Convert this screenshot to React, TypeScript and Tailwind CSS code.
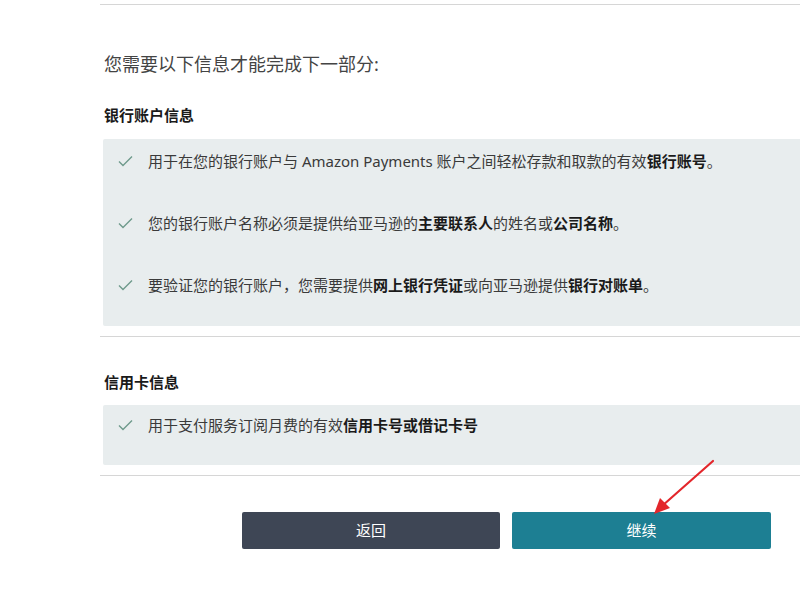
import React from "react";

const Check = () => (
  <svg width="15" height="12" viewBox="0 0 15 12" className="shrink-0">
    <polyline points="1,6.5 5,10.5 14,1.5" fill="none" stroke="#6e9a8c" strokeWidth="1.4" />
  </svg>
);

const Row = ({ children }: { children: React.ReactNode }) => (
  <div className="flex items-center h-[22px] pl-[15px] gap-[15px]">
    <Check />
    <span className="text-[15px] leading-[22px] text-[#3a3a3a] whitespace-nowrap">{children}</span>
  </div>
);

const B = ({ children }: { children: React.ReactNode }) => (
  <span className="font-bold text-[#1a1a1a]">{children}</span>
);

export default function App() {
  return (
    <div
      className="relative w-[800px] h-[600px] bg-white overflow-hidden"
      style={{ fontFamily: '"Noto Sans", "Noto Sans CJK SC", sans-serif' }}
    >
      <div className="ml-[100px] w-[813px] pt-[4px]">
        <div className="h-px bg-[#d6d6d6]" />
        <div className="mt-[46px] pl-[4px] text-[18px] leading-[26px] text-[#444]">
          您需要以下信息才能完成下一部分:
        </div>
        <div className="mt-[27px] pl-[4px] text-[15px] leading-[22px] font-bold text-[#1a1a1a]">
          银行账户信息
        </div>
        <div className="mt-[13px] ml-[3px] bg-[#e8edee] pt-[11px] pb-[30px] flex flex-col gap-[40px] rounded-[2px]">
          <Row>
            用于在您的银行账户与 Amazon Payments 账户之间轻松存款和取款的有效<B>银行账号</B>。
          </Row>
          <Row>
            您的银行账户名称必须是提供给亚马逊的<B>主要联系人</B>的姓名或<B>公司名称</B>。
          </Row>
          <Row>
            要验证您的银行账户，您需要提供<B>网上银行凭证</B>或向亚马逊提供<B>银行对账单</B>。
          </Row>
        </div>
        <div className="mt-[10px] h-px bg-[#d6d6d6]" />
        <div className="mt-[34px] pl-[4px] text-[15px] leading-[22px] font-bold text-[#1a1a1a]">
          信用卡信息
        </div>
        <div className="mt-[12px] ml-[3px] bg-[#e8edee] pt-[9px] pb-[29px] rounded-[2px]">
          <Row>
            用于支付服务订阅月费的有效<B>信用卡号或借记卡号</B>
          </Row>
        </div>
        <div className="mt-[10px] h-px bg-[#d6d6d6]" />
        <div className="mt-[36px] pl-[142px] flex gap-[12px]">
          <button className="w-[258px] h-[37px] bg-[#3e4655] text-white text-[15px] rounded-[2px]">
            返回
          </button>
          <button className="w-[259px] h-[37px] bg-[#1d7f93] text-white text-[15px] rounded-[2px]">
            继续
          </button>
        </div>
      </div>
      <svg className="absolute left-0 top-0" width="800" height="600" viewBox="0 0 800 600">
        <line x1="713" y1="461" x2="662" y2="506" stroke="#e3262b" strokeWidth="2.2" strokeLinecap="round" />
        <polygon points="654,514 660,498 670,508" fill="#e3262b" />
      </svg>
    </div>
  );
}
